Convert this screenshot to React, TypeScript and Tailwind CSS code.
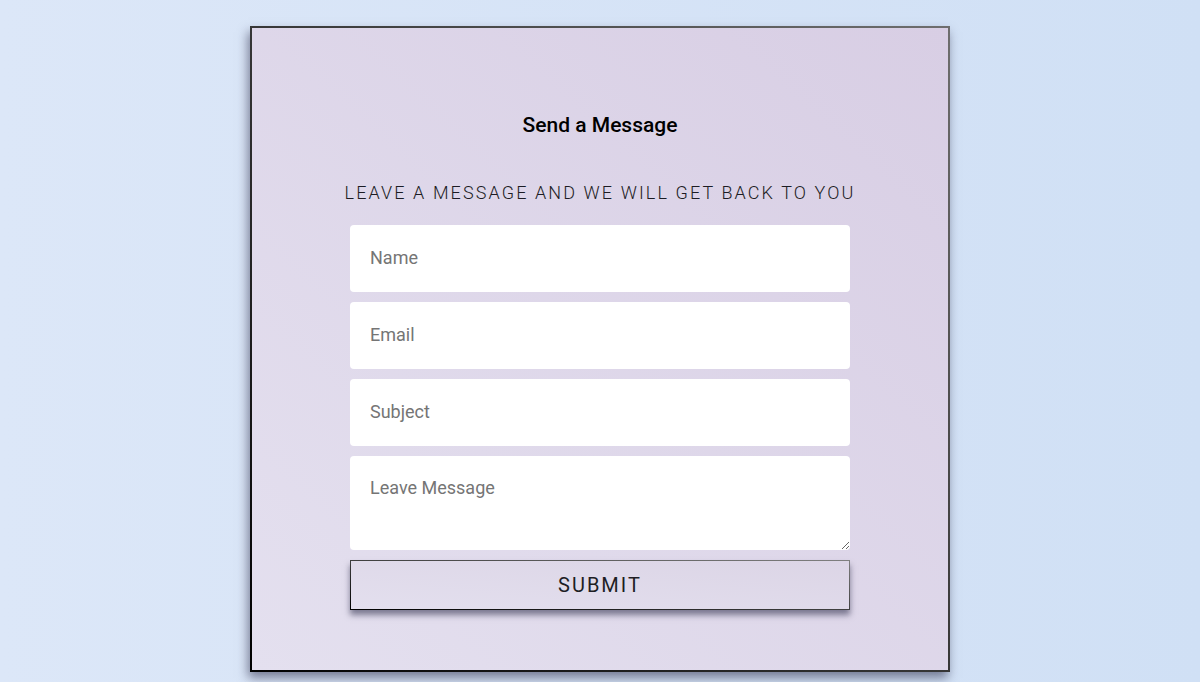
import React from "react";

export default function App() {
  const field =
    "w-full h-[67px] rounded-[4px] bg-white px-5 pb-[3px] text-[18px] text-[#222] placeholder:text-[#757575] outline-none border-0";
  return (
    <div
      className="w-[1200px] h-[682px] overflow-hidden bg-[linear-gradient(to_right,#dce7f8,#d0e0f5)] flex justify-center pt-[26px]"
      style={{ fontFamily: "Roboto, 'Liberation Sans', sans-serif" }}
    >
      <div className="w-[700px] h-[646px] p-[2px] bg-[linear-gradient(to_bottom_left,#6e6e6e,#000)] shadow-[-2px_6px_10px_rgba(40,40,70,0.55)] shrink-0">
        <div className="w-full h-full bg-[linear-gradient(to_top_right,#e4e0ef,#d8cee4)] flex flex-col items-center pt-[85px]">
          <h1 className="text-[21px] leading-6 font-medium text-black">Send a Message</h1>
          <p className="mt-[46px] text-[18px] leading-5 font-light tracking-[2.1px] text-[#1c1c24]">
            LEAVE A MESSAGE AND WE WILL GET BACK TO YOU
          </p>
          <form className="mt-[22px] w-[500px] flex flex-col gap-[10px]" onSubmit={(e) => e.preventDefault()}>
            <input className={field} placeholder="Name" />
            <input className={field} placeholder="Email" />
            <input className={field} placeholder="Subject" />
            <textarea
              className="w-full h-[94px] rounded-[4px] bg-white px-5 pt-[22px] text-[18px] leading-5 text-[#222] placeholder:text-[#757575] outline-none border-0"
              placeholder="Leave Message"
            />
            <div className="w-full h-[50px] p-px bg-[linear-gradient(to_top_right,#000,#808080)] shadow-[0_5px_6px_rgba(40,40,70,0.55)]">
              <button
                type="submit"
                className="w-full h-full bg-[linear-gradient(to_top_right,#e3dfee,#dcd5e6)] text-[20px] tracking-[2px] text-[#1e1e24]"
              >
                SUBMIT
              </button>
            </div>
          </form>
        </div>
      </div>
    </div>
  );
}
